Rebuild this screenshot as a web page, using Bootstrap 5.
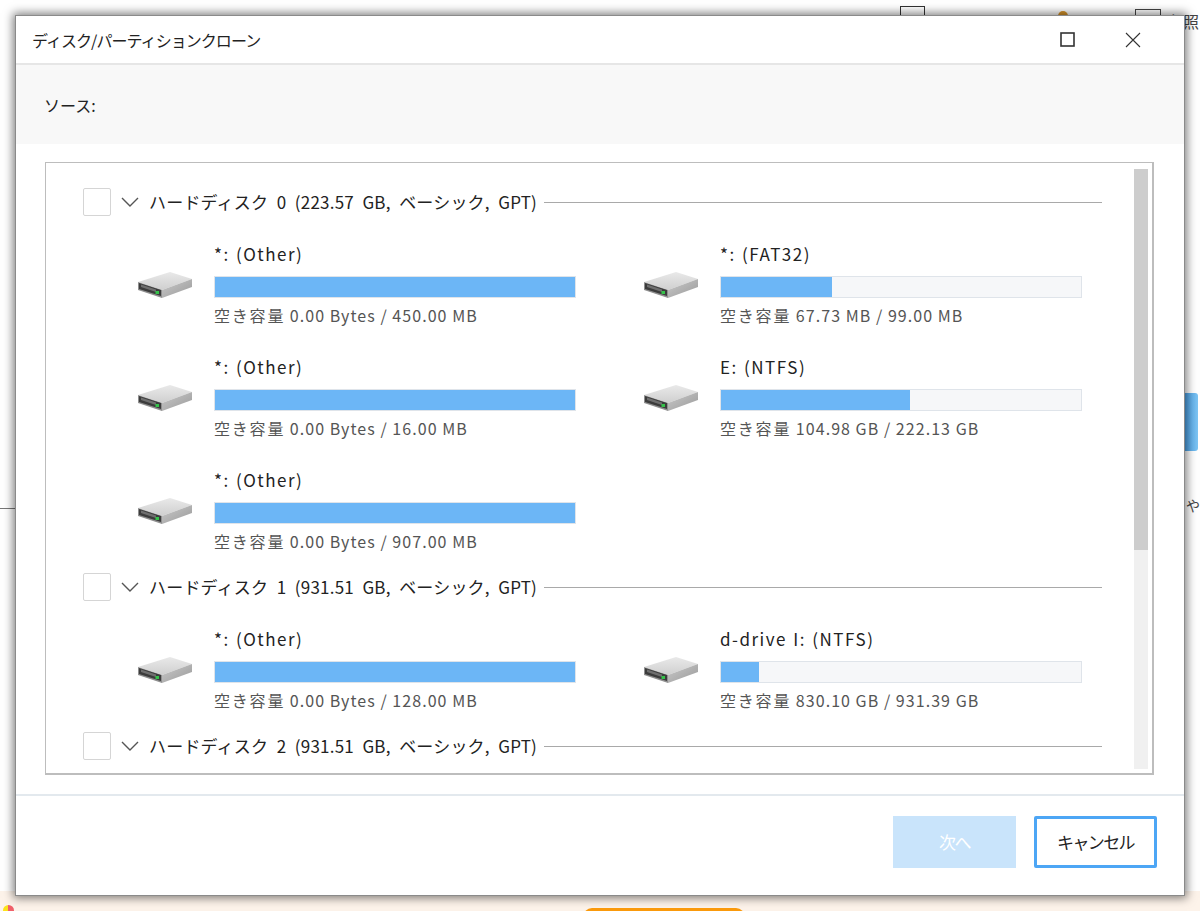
<!doctype html>
<html lang="ja"><head><meta charset="utf-8"><title>ディスク/パーティションクローン</title>
<link href="https://cdn.jsdelivr.net/npm/bootstrap@5.3.0/dist/css/bootstrap.min.css" rel="stylesheet">
<style>
html,body{height:911px;overflow:hidden}
body{background:#fff;font-family:"Noto Sans CJK JP","Noto Sans",sans-serif;color:#222;position:relative}
.desk-tint{position:absolute;left:0;right:0;bottom:0;height:20px;background:#fdf3ea}
.desk-pill{position:absolute;left:583px;top:908px;width:162px;height:20px;border-radius:9px;background:#fb9a0c}
.desk-tick{position:absolute;left:0;top:508px;width:15px;height:1px;background:#777}
.desk-tile{position:absolute;left:1180px;top:393px;width:18px;height:58px;border-radius:3px;background:linear-gradient(90deg,#3d97e3,#7cc4f3)}
.desk-box{position:absolute;left:900px;top:6px;width:25px;height:12px;border:1px solid #333;border-bottom:0}
.desk-folder{position:absolute;left:1135px;top:9px;width:26px;height:10px;border:1px solid #444;border-bottom:0}
.desk-dot{position:absolute;left:1058px;top:11px;width:10px;height:10px;border-radius:50%;background:#d9962b}
.desk-flame{position:absolute;left:3px;top:905px;width:11px;height:11px;background:linear-gradient(90deg,#fbe21a 50%,#f0606a 50%);border-radius:50% 50% 0 0}
.desk-glyph{position:absolute;font-size:16px;line-height:1;color:#444;white-space:nowrap}
.app-window{position:absolute;left:15px;top:15px;width:1170px;height:881px;background:#fff;border:1px solid #8a8a8a;box-shadow:0 0 9px 2px rgba(0,0,0,.5);display:flex;flex-direction:column}
.win-title{height:49px;flex:none;border-bottom:2px solid #e6e6e6;padding:0 19px 0 16px;font-size:16px;letter-spacing:-.95px}
.win-ctl{width:65px;height:100%;display:flex;align-items:center;justify-content:center}
.src-band{height:79px;flex:none;background:#f8f8f8;padding:0 0 0 28px;font-size:16px}
.main-pane{margin:18px 30px 0 29px;height:613px;flex:none;border:1px solid #bdbdbd;border-bottom-width:2px;border-right-width:2px;display:flex;overflow:hidden;position:relative}
.disk-scroll{width:1088px;flex:none;height:100%;padding-top:25px;overflow:hidden}
.disk-head{height:28px;display:flex;align-items:center;margin-left:37px;width:1019px;font-size:17px;letter-spacing:.2px;word-spacing:4.5px;white-space:nowrap}
.disk-check{width:28px;height:28px;flex:none;border:1px solid #d5d5d5;border-radius:2px;background:#fff}
.disk-caret{margin:0 10px;flex:none}
.disk-rule{flex:1;height:1px;background:#a9a9a9;margin-left:7px}
.part-grid{display:grid;grid-template-columns:506px 506px;grid-auto-rows:113px;margin:26px 0 -8px 92px}
.part-cell{display:flex;height:113px}
.drive-ico{margin-top:29px;flex:none;width:54px;height:28px}
.part-info{margin-left:22px;width:361.5px}
.part-name{height:23px;line-height:23px;font-size:17px;letter-spacing:1.5px;word-spacing:1px;white-space:nowrap;margin-bottom:-1px}
.part-meter{height:22px;background:#f6f7f9;border:1px solid #dfe4ea;margin-top:12px}
.part-fill{height:100%;background:#6cb6f6}
.part-free{font-size:16px;color:#555;margin-top:6px;line-height:22px;white-space:nowrap;letter-spacing:1.05px}
.free-key{letter-spacing:1.8px}
.vbar{position:absolute;left:1088px;top:6px;bottom:4px;width:14px;background:#f0f0f0}
.vbar-thumb{height:381px;background:#cdcdcd}
.win-foot{margin-top:19px;border-top:2px solid #e3e9ee;flex:1;display:flex;justify-content:flex-end;align-items:flex-start;padding:20px 27px 0 0;gap:18px}
.foot-btn{width:123px;height:52px;border-radius:0;font-size:17px;letter-spacing:-1.6px;padding:0;font-family:inherit}
.foot-next,.foot-next:disabled{background:#c9e4fb;border:0;color:#fff;opacity:1}
.foot-cancel,.foot-cancel:hover{background:#fff;color:#222;border:3px solid #4da6f5;border-radius:2px}
</style></head>
<body>
<svg width="0" height="0" class="d-block position-absolute"><defs>
<linearGradient id="gt" x1="0" y1="0" x2="0" y2="1"><stop offset="0" stop-color="#e9e9e9"/><stop offset="1" stop-color="#cfcfcf"/></linearGradient>
<linearGradient id="gs" x1="0" y1="0" x2="1" y2="1"><stop offset="0" stop-color="#c9c9c9"/><stop offset="1" stop-color="#9a9a9a"/></linearGradient>
<symbol id="drv" viewBox="0 0 54 28">
<polygon points="0,11 32,1 54,8 24,19" fill="url(#gt)"/>
<polygon points="24,19 54,8 54,16 24,27" fill="url(#gs)"/>
<polygon points="0,11 24,19 24,27 0,19" fill="#8f8f8f"/>
<polygon points="1,12 23,19 23,25 1,18" fill="#3c3c3c"/>
<polygon points="3,13.5 18,18.5 18,21 3,16" fill="#6f6f6f"/>
<rect x="17.5" y="20" width="3.5" height="3" fill="#35c24a"/>
</symbol></defs></svg>

<div class="desk-tint"></div><div class="desk-pill"></div><div class="desk-tick"></div><div class="desk-tile"></div><div class="desk-box"></div><div class="desk-folder"></div><div class="desk-dot"></div><div class="desk-flame"></div>
<span class="desk-glyph" style="left:1167px;top:13px">参照</span>
<span class="desk-glyph" style="left:1186px;top:498px;font-size:14px">や</span>

<div class="app-window">
  <div class="win-title d-flex align-items-center">
    <span class="flex-grow-1">ディスク/パーティションクローン</span>
    <span class="win-ctl"><svg width="15" height="15" viewBox="0 0 15 15"><rect x="1" y="1" width="13" height="13" fill="none" stroke="#333" stroke-width="1.6"/></svg></span>
    <span class="win-ctl"><svg width="16" height="16" viewBox="0 0 16 16"><path d="M1 1l14 14M15 1L1 15" stroke="#333" stroke-width="1.1" fill="none"/></svg></span>
  </div>
  <div class="src-band d-flex align-items-center">ソース:</div>
  <div class="main-pane">
    <div class="disk-scroll">
      <div class="disk-head"><span class="disk-check"></span><svg class="disk-caret" width="18" height="10" viewBox="0 0 18 10"><path d="M1 1l8 8 8-8" fill="none" stroke="#555" stroke-width="1.4"/></svg><span>ハードディスク 0 (223.57 GB, ベーシック, GPT)</span><span class="disk-rule"></span></div>
      <div class="part-grid">
        <div class="part-cell"><svg class="drive-ico"><use href="#drv"/></svg><div class="part-info"><div class="part-name">*: (Other)</div><div class="part-meter"><div class="part-fill" style="width:100%"></div></div><div class="part-free"><span class="free-key">空き容量</span> 0.00 Bytes / 450.00 MB</div></div></div>
        <div class="part-cell"><svg class="drive-ico"><use href="#drv"/></svg><div class="part-info"><div class="part-name">*: (FAT32)</div><div class="part-meter"><div class="part-fill" style="width:31%"></div></div><div class="part-free"><span class="free-key">空き容量</span> 67.73 MB / 99.00 MB</div></div></div>
        <div class="part-cell"><svg class="drive-ico"><use href="#drv"/></svg><div class="part-info"><div class="part-name">*: (Other)</div><div class="part-meter"><div class="part-fill" style="width:100%"></div></div><div class="part-free"><span class="free-key">空き容量</span> 0.00 Bytes / 16.00 MB</div></div></div>
        <div class="part-cell"><svg class="drive-ico"><use href="#drv"/></svg><div class="part-info"><div class="part-name">E: (NTFS)</div><div class="part-meter"><div class="part-fill" style="width:52.5%"></div></div><div class="part-free"><span class="free-key">空き容量</span> 104.98 GB / 222.13 GB</div></div></div>
        <div class="part-cell"><svg class="drive-ico"><use href="#drv"/></svg><div class="part-info"><div class="part-name">*: (Other)</div><div class="part-meter"><div class="part-fill" style="width:100%"></div></div><div class="part-free"><span class="free-key">空き容量</span> 0.00 Bytes / 907.00 MB</div></div></div>
      </div>
      <div class="disk-head"><span class="disk-check"></span><svg class="disk-caret" width="18" height="10" viewBox="0 0 18 10"><path d="M1 1l8 8 8-8" fill="none" stroke="#555" stroke-width="1.4"/></svg><span>ハードディスク 1 (931.51 GB, ベーシック, GPT)</span><span class="disk-rule"></span></div>
      <div class="part-grid">
        <div class="part-cell"><svg class="drive-ico"><use href="#drv"/></svg><div class="part-info"><div class="part-name">*: (Other)</div><div class="part-meter"><div class="part-fill" style="width:100%"></div></div><div class="part-free"><span class="free-key">空き容量</span> 0.00 Bytes / 128.00 MB</div></div></div>
        <div class="part-cell"><svg class="drive-ico"><use href="#drv"/></svg><div class="part-info"><div class="part-name">d-drive I: (NTFS)</div><div class="part-meter"><div class="part-fill" style="width:10.5%"></div></div><div class="part-free"><span class="free-key">空き容量</span> 830.10 GB / 931.39 GB</div></div></div>
      </div>
      <div class="disk-head"><span class="disk-check"></span><svg class="disk-caret" width="18" height="10" viewBox="0 0 18 10"><path d="M1 1l8 8 8-8" fill="none" stroke="#555" stroke-width="1.4"/></svg><span>ハードディスク 2 (931.51 GB, ベーシック, GPT)</span><span class="disk-rule"></span></div>
    </div>
    <div class="vbar"><div class="vbar-thumb"></div></div>
  </div>
  <div class="win-foot">
    <button class="btn foot-btn foot-next" disabled>次へ</button>
    <button class="btn foot-btn foot-cancel">キャンセル</button>
  </div>
</div>
<script src="https://cdn.jsdelivr.net/npm/bootstrap@5.3.0/dist/js/bootstrap.bundle.min.js"></script>
</body></html>
